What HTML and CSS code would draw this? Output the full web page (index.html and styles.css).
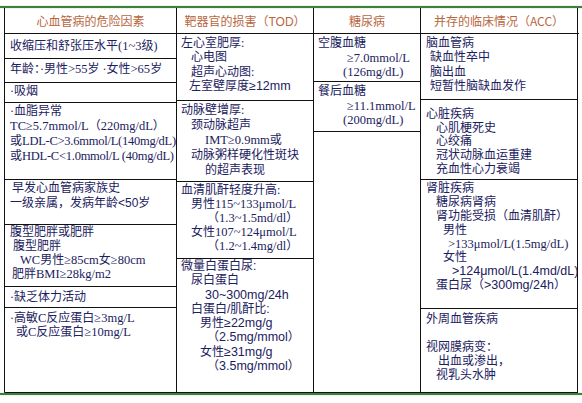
FILE: index.html
```html
<!DOCTYPE html>
<html lang="zh">
<head>
<meta charset="utf-8">
<link rel="stylesheet" href="styles.css">
</head>
<body>
<div class="page">
  <div class="rule top"></div>
  <div class="table">
    <div class="head">
      <div class="hc w1">心血管病的危险因素</div>
      <div class="hc w2">靶器官的损害<span class="sans">（TOD）</span></div>
      <div class="hc w3">糖尿病</div>
      <div class="hc w4">并存的临床情况（ACC）</div>
    </div>
    <div class="body">
      <div class="col w1 c1">
        <div class="cell a1"><div>收缩压和舒张压水平<span class="l">(1~3</span>级)</div></div>
        <div class="cell a2"><div>年龄：·男性<span class="l">&gt;55</span>岁 ·女性<span class="l">&gt;65</span>岁</div></div>
        <div class="cell a3"><div>·吸烟</div></div>
        <div class="cell a4 lh15">
          <div>·血脂异常</div>
          <div><span class="l">TC≥5.7mmol/L</span>（<span class="l">220mg/dL</span>）</div>
          <div>或<span class="l tight">LDL-C&gt;3.6mmol/L(140mg/dL)</span></div>
          <div>或<span class="l tight">HDL-C&lt;1.0mmol/L (40mg/dL)</span></div>
        </div>
        <div class="cell a5 lh15">
          <div class="in2">早发心血管病家族史</div>
          <div class="sans">一级亲属，发病年龄&lt;50岁</div>
        </div>
        <div class="cell a6">
          <div>腹型肥胖或肥胖</div>
          <div class="in3">腹型肥胖</div>
          <div class="in10"><span class="l">WC</span>男性<span class="l">≥85cm</span>女<span class="l">≥80cm</span></div>
          <div class="in2">肥胖<span class="l">BMI≥28kg/m2</span></div>
        </div>
        <div class="cell a7"><div>·缺乏体力活动</div></div>
        <div class="cell a8">
          <div>·高敏<span class="l">C</span>反应蛋白<span class="l">≥3mg/L</span></div>
          <div class="in6">或<span class="l">C</span>反应蛋白<span class="l">≥10mg/L</span></div>
        </div>
      </div>
      <div class="col w2 c2">
        <div class="cell b1 lh143">
          <div>左心室肥厚:</div>
          <div class="in10">心电图</div>
          <div class="in10">超声心动图:</div>
          <div class="in8 sans">左室壁厚度<span class="l">≥12mm</span></div>
        </div>
        <div class="cell b2 lh15">
          <div>动脉壁增厚:</div>
          <div class="in10">颈动脉超声</div>
          <div class="in24"><span class="l">IMT≥0.9mm</span>或</div>
          <div class="in10">动脉粥样硬化性斑块</div>
          <div class="in24">的超声表现</div>
        </div>
        <div class="cell b3">
          <div>血清肌酐轻度升高:</div>
          <div class="in10">男性<span class="l">115~133μmol/L</span></div>
          <div class="in26">（<span class="l">1.3~1.5md/dl</span>）</div>
          <div class="in10">女性<span class="l">107~124μmol/L</span></div>
          <div class="in26">（<span class="l">1.2~1.4mg/dl</span>）</div>
        </div>
        <div class="cell b4 lh143 sans">
          <div>微量白蛋白尿:</div>
          <div class="in10">尿白蛋白</div>
          <div class="in24"><span class="l">30~300mg/24h</span></div>
          <div class="in10">白蛋白/肌酐比:</div>
          <div class="in19">男性<span class="l">≥22mg/g</span></div>
          <div class="in26">（<span class="l">2.5mg/mmol</span>）</div>
          <div class="in19">女性<span class="l">≥31mg/g</span></div>
          <div class="in26">（<span class="l">3.5mg/mmol</span>）</div>
        </div>
      </div>
      <div class="col w3 c3">
        <div class="cell d1 lh145">
          <div>空腹血糖</div>
          <div class="in29"><span class="l">≥7.0mmol/L</span></div>
          <div class="in25"><span class="l">(126mg/dL)</span></div>
        </div>
        <div class="cell d2 lh145">
          <div>餐后血糖</div>
          <div class="in29"><span class="l">≥11.1mmol/L</span></div>
          <div class="in25"><span class="l">(200mg/dL)</span></div>
        </div>
        <div class="cell d3"></div>
      </div>
      <div class="col w4 c4">
        <div class="cell e1 lh143">
          <div>脑血管病</div>
          <div class="in4">缺血性卒中</div>
          <div class="in4">脑出血</div>
          <div class="in4">短暂性脑缺血发作</div>
        </div>
        <div class="cell e2 lh137">
          <div>心脏疾病</div>
          <div class="in10">心肌梗死史</div>
          <div class="in10">心绞痛</div>
          <div class="in10">冠状动脉血运重建</div>
          <div class="in10">充血性心力衰竭</div>
        </div>
        <div class="cell e3 lh139">
          <div>肾脏疾病</div>
          <div class="in10">糖尿病肾病</div>
          <div class="in10">肾功能受损（血清肌酐）</div>
          <div class="in17">男性</div>
          <div class="in22"><span class="l">&gt;133μmol/L(1.5mg/dL)</span></div>
          <div class="in17">女性</div>
          <div class="in26 sans"><span class="l">&gt;124μmol/L(1.4md/dL)</span></div>
          <div class="in10 sans">蛋白尿（<span class="l">&gt;300mg/24h</span>）</div>
        </div>
        <div class="cell e4">
          <div>外周血管疾病</div>
          <div class="blank"></div>
          <div>视网膜病变：</div>
          <div class="in12">出血或渗出，</div>
          <div class="in10">视乳头水肿</div>
        </div>
      </div>
    </div>
  </div>
  <div class="rule bottom"></div>
</div>
</body>
</html>
```

FILE: styles.css
```css
html, body {
  margin: 0;
  padding: 0;
  background: #ffffff;
}

.page {
  width: 582px;
  height: 403px;
  padding-top: 6px;
  box-sizing: border-box;
  font-family: "Liberation Serif", "Noto Sans CJK SC", serif;
  font-size: 12px;
  color: #1b2160;
}

.sans {
  font-family: "Liberation Sans", "Noto Sans CJK SC", sans-serif;
}

.l {
  font-size: 12.5px;
}

.tight {
  letter-spacing: -0.25px;
}

.rule {
  height: 2px;
  background: #3f7f3c;
  box-shadow: 0 0 2px #b9d8b0;
}

.table {
  margin-left: 4px;
  width: 574px;
  border-left: 1px solid #111;
}

.head {
  display: flex;
  border-bottom: 1px solid #111;
}

.hc {
  height: 25px;
  line-height: 25px;
  text-align: center;
  color: #b8663e;
  border-right: 1px solid #111;
  box-sizing: border-box;
  font-family: "Noto Sans CJK SC", sans-serif;
  white-space: nowrap;
}

.w1 { width: 172px; }
.w2 { width: 137px; }
.w3 { width: 107px; }
.w4 { width: 157px; }

.body {
  display: flex;
}

.col {
  display: flex;
  flex-direction: column;
  border-right: 1px solid #111;
  box-sizing: border-box;
}

.cell {
  border-bottom: 1px solid #111;
  box-sizing: border-box;
  line-height: 14px;
  white-space: nowrap;
  overflow: hidden;
}

.cell > div {
  height: 1lh;
}

.c1 .cell { padding-left: 5px; }
.c2 .cell { padding-left: 4px; }
.c3 .cell { padding-left: 4px; }
.c4 .cell { padding-left: 5px; }

.lh15 { line-height: 15px; }
.lh145 { line-height: 14.5px; }
.lh143 { line-height: 14.3px; }
.lh139 { line-height: 13.9px; }
.lh137 { line-height: 13.7px; }

.blank { height: 14px; }

/* column 1 */
.a1 { height: 25px; padding-top: 5px; }
.a2 { height: 24px; padding-top: 3px; }
.a3 { height: 20px; padding-top: 1px; }
.a4 { height: 77px; padding-top: 1px; }
.a5 { height: 45px; padding-top: 1px; }
.a6 { height: 62px; padding-top: 0; }
.a7 { height: 21px; padding-top: 3px; }
.a8 { height: 85px; padding-top: 3px; }

/* column 2 */
.b1 { height: 67px; padding-top: 2px; }
.b2 { height: 81px; padding-top: 2px; }
.b3 { height: 77px; padding-top: 1px; }
.b4 { height: 134px; padding-top: 0; }

/* column 3 */
.d1 { height: 48px; padding-top: 2px; }
.d2 { height: 50px; padding-top: 2px; }
.d3 { height: 261px; }

/* column 4 */
.e1 { height: 66px; padding-top: 2px; }
.e2 { height: 80px; padding-top: 8px; }
.e3 { height: 129px; padding-top: 2px; }
.e4 { height: 84px; padding-top: 3px; }

.in2 { padding-left: 2px; }
.in3 { padding-left: 3px; }
.in4 { padding-left: 4px; }
.in6 { padding-left: 6px; }
.in8 { padding-left: 8px; }
.in10 { padding-left: 10px; }
.in12 { padding-left: 12px; }
.in17 { padding-left: 17px; }
.in19 { padding-left: 19px; }
.in22 { padding-left: 22px; }
.in24 { padding-left: 24px; }
.in25 { padding-left: 25px; }
.in26 { padding-left: 26px; }
.in29 { padding-left: 29px; }
```
